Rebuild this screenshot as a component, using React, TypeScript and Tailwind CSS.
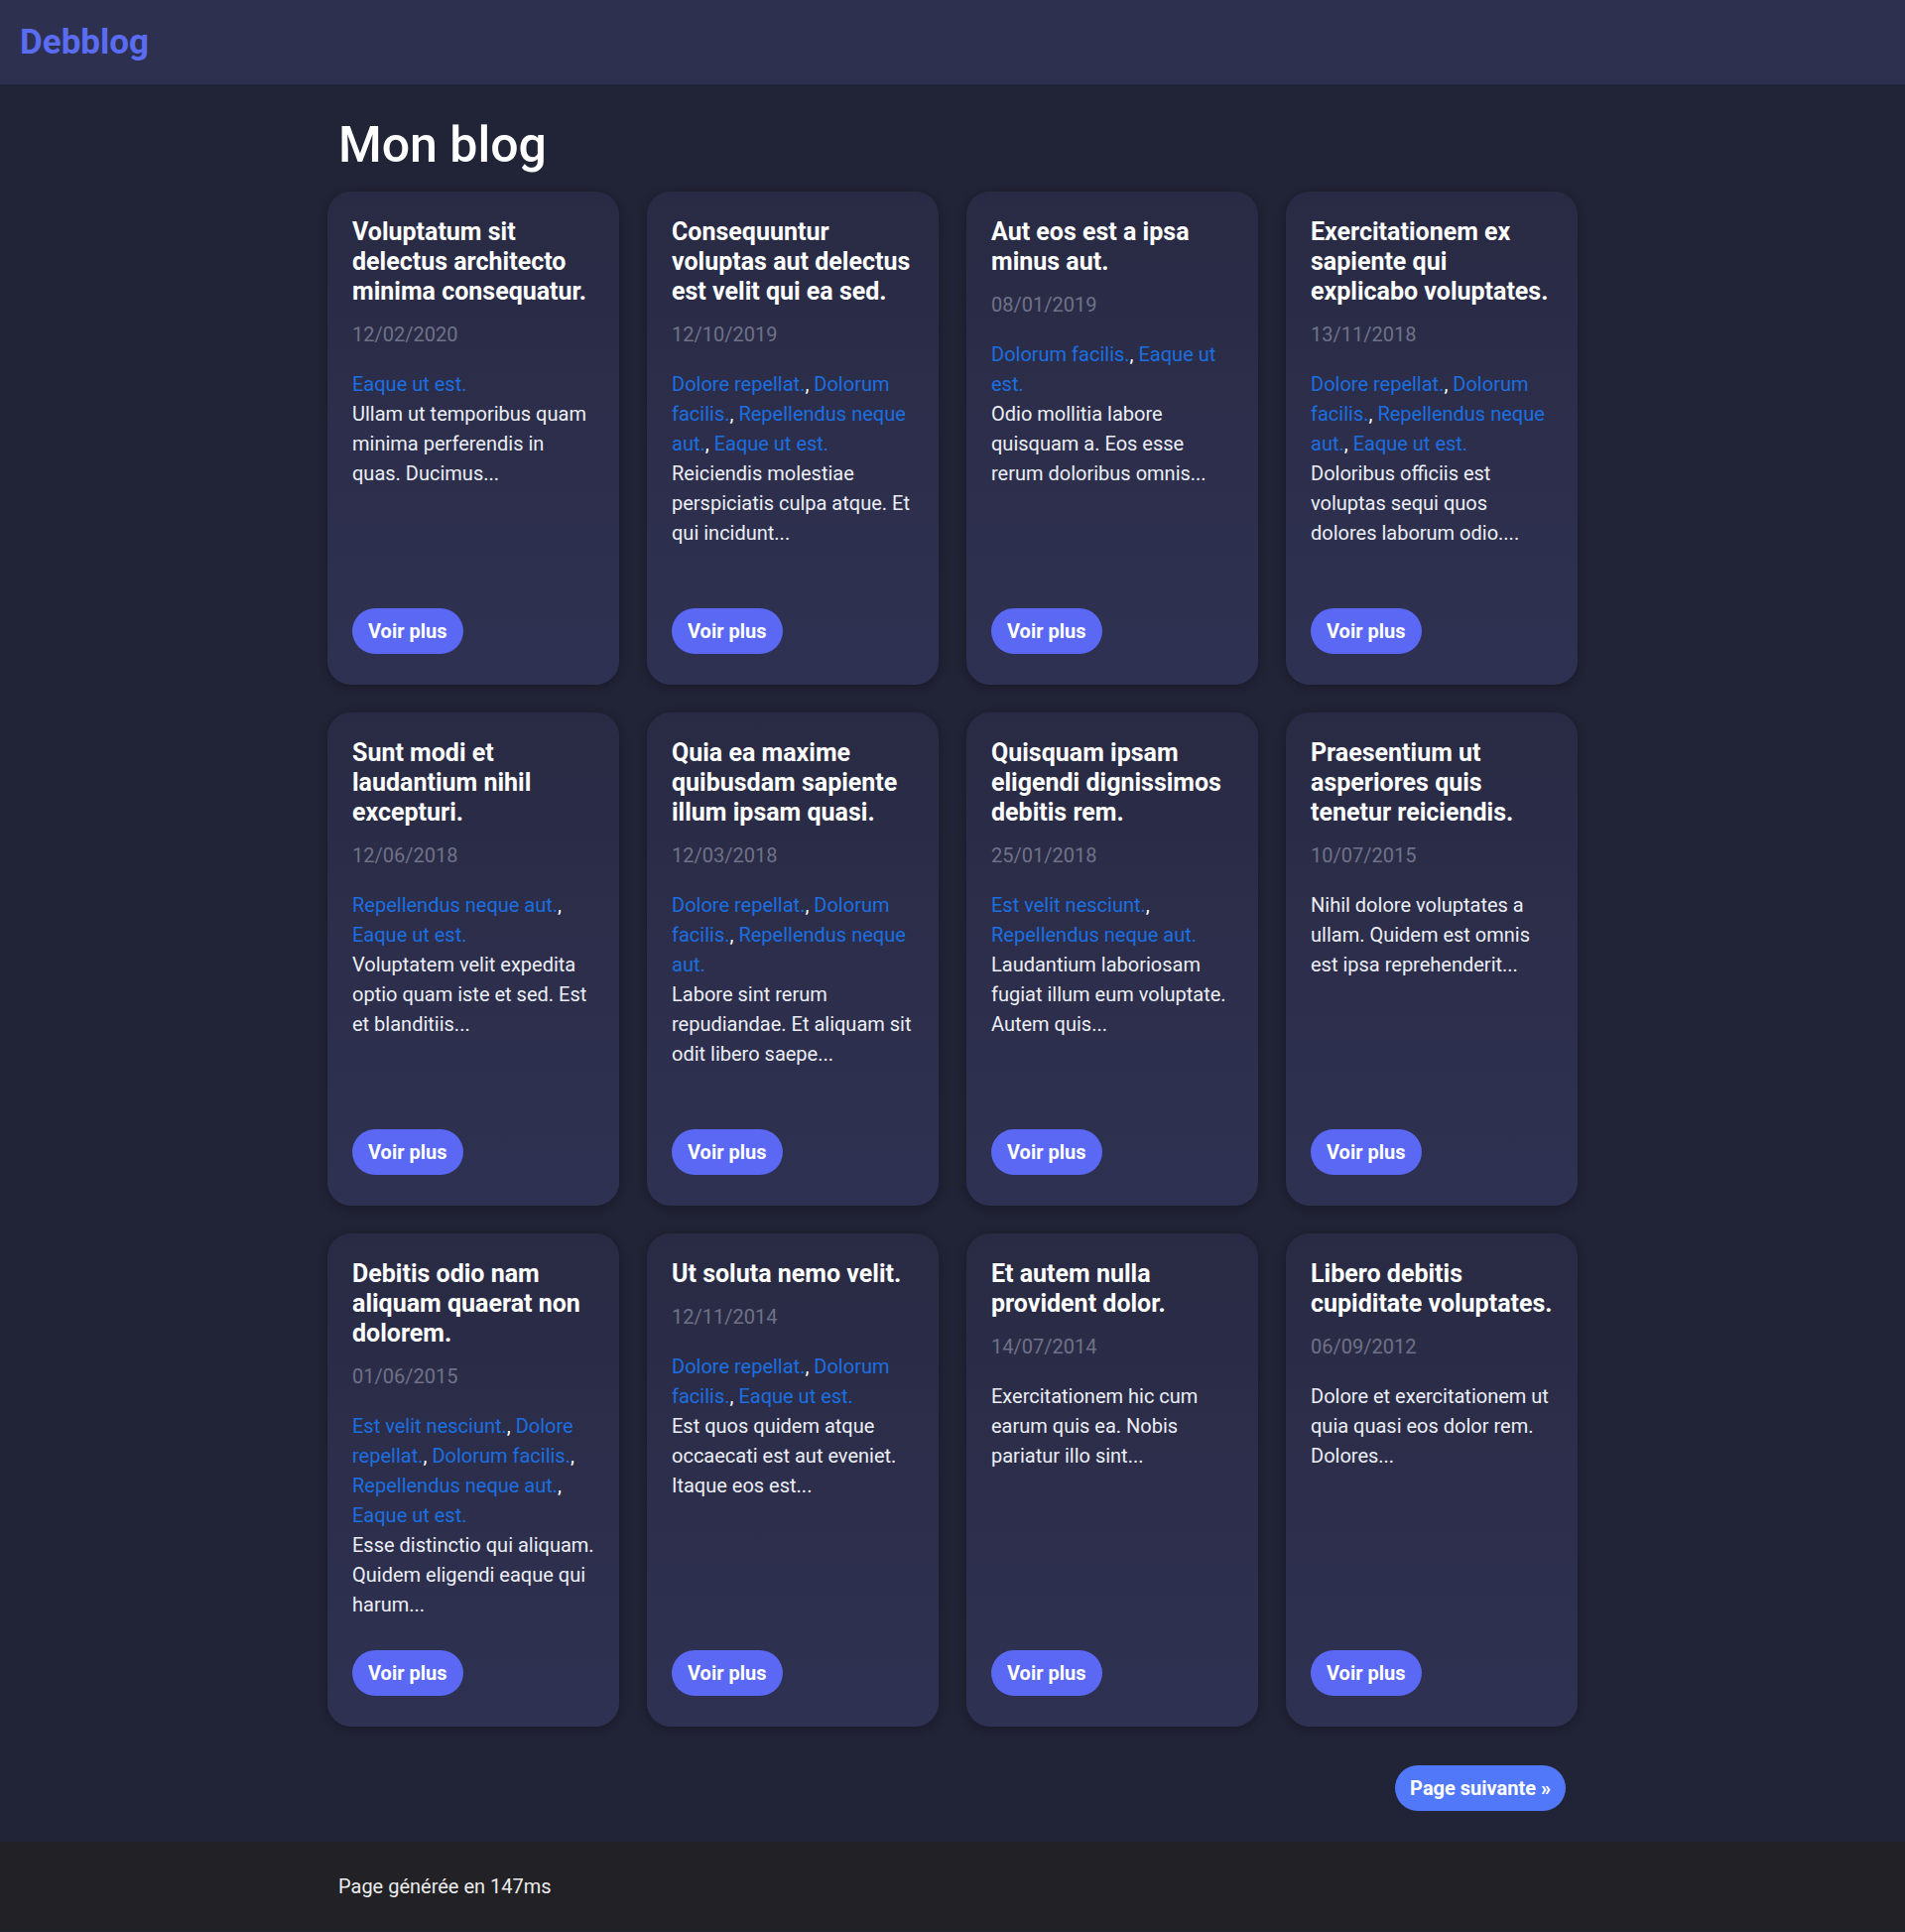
import React from 'react'

type Post = {
  title: string
  date: string
  tags: string[]
  excerpt: string
}

const posts: Post[] = [
  {
    title: 'Voluptatum sit delectus architecto minima consequatur.',
    date: '12/02/2020',
    tags: ['Eaque ut est.'],
    excerpt: 'Ullam ut temporibus quam minima perferendis in quas. Ducimus...',
  },
  {
    title: 'Consequuntur voluptas aut delectus est velit qui ea sed.',
    date: '12/10/2019',
    tags: ['Dolore repellat.', 'Dolorum facilis.', 'Repellendus neque aut.', 'Eaque ut est.'],
    excerpt: 'Reiciendis molestiae perspiciatis culpa atque. Et qui incidunt...',
  },
  {
    title: 'Aut eos est a ipsa minus aut.',
    date: '08/01/2019',
    tags: ['Dolorum facilis.', 'Eaque ut est.'],
    excerpt: 'Odio mollitia labore quisquam a. Eos esse rerum doloribus omnis...',
  },
  {
    title: 'Exercitationem ex sapiente qui explicabo voluptates.',
    date: '13/11/2018',
    tags: ['Dolore repellat.', 'Dolorum facilis.', 'Repellendus neque aut.', 'Eaque ut est.'],
    excerpt: 'Doloribus officiis est voluptas sequi quos dolores laborum odio....',
  },
  {
    title: 'Sunt modi et laudantium nihil excepturi.',
    date: '12/06/2018',
    tags: ['Repellendus neque aut.', 'Eaque ut est.'],
    excerpt: 'Voluptatem velit expedita optio quam iste et sed. Est et blanditiis...',
  },
  {
    title: 'Quia ea maxime quibusdam sapiente illum ipsam quasi.',
    date: '12/03/2018',
    tags: ['Dolore repellat.', 'Dolorum facilis.', 'Repellendus neque aut.'],
    excerpt: 'Labore sint rerum repudiandae. Et aliquam sit odit libero saepe...',
  },
  {
    title: 'Quisquam ipsam eligendi dignissimos debitis rem.',
    date: '25/01/2018',
    tags: ['Est velit nesciunt.', 'Repellendus neque aut.'],
    excerpt: 'Laudantium laboriosam fugiat illum eum voluptate. Autem quis...',
  },
  {
    title: 'Praesentium ut asperiores quis tenetur reiciendis.',
    date: '10/07/2015',
    tags: [],
    excerpt: 'Nihil dolore voluptates a ullam. Quidem est omnis est ipsa reprehenderit...',
  },
  {
    title: 'Debitis odio nam aliquam quaerat non dolorem.',
    date: '01/06/2015',
    tags: ['Est velit nesciunt.', 'Dolore repellat.', 'Dolorum facilis.', 'Repellendus neque aut.', 'Eaque ut est.'],
    excerpt: 'Esse distinctio qui aliquam. Quidem eligendi eaque qui harum...',
  },
  {
    title: 'Ut soluta nemo velit.',
    date: '12/11/2014',
    tags: ['Dolore repellat.', 'Dolorum facilis.', 'Eaque ut est.'],
    excerpt: 'Est quos quidem atque occaecati est aut eveniet. Itaque eos est...',
  },
  {
    title: 'Et autem nulla provident dolor.',
    date: '14/07/2014',
    tags: [],
    excerpt: 'Exercitationem hic cum earum quis ea. Nobis pariatur illo sint...',
  },
  {
    title: 'Libero debitis cupiditate voluptates.',
    date: '06/09/2012',
    tags: [],
    excerpt: 'Dolore et exercitationem ut quia quasi eos dolor rem. Dolores...',
  },
]

function PostCard({ post }: { post: Post }) {
  return (
    <article className="flex h-[497px] flex-col rounded-3xl bg-gradient-to-b from-[#292b44] to-[#2f3152] px-[25px] pt-[26px] pb-[31px] shadow-[0_2px_10px_rgba(0,0,0,0.25)]">
      <h2 className="text-[25px] font-bold leading-[30px] text-white">{post.title}</h2>
      <p className="mt-[13px] text-[20px] leading-[30px] text-[#6f7287]">{post.date}</p>
      <div className="mt-[20px] text-[20px] leading-[30px]">
        {post.tags.length > 0 && (
          <p className="text-white">
            {post.tags.map((tag, i) => (
              <span key={tag}>
                <a href="#" className="text-[#1c6fe0]">
                  {tag}
                </a>
                {i < post.tags.length - 1 && ', '}
              </span>
            ))}
          </p>
        )}
        <p className="text-[#eceef5]">{post.excerpt}</p>
      </div>
      <div className="mt-auto">
        <a
          href="#"
          className="inline-flex h-[46px] items-center rounded-full bg-[#5a68f3] px-4 text-[20px] font-bold text-white"
        >
          Voir plus
        </a>
      </div>
    </article>
  )
}

export default function App() {
  return (
    <div className="min-h-screen bg-[#212336] font-['Roboto',sans-serif]">
      <header className="flex h-[85px] items-center bg-[#2e3050] px-[20px]">
        <a href="#" className="text-[35px] font-bold leading-none text-[#5a6cf0]">
          Debblog
        </a>
      </header>

      <main className="mx-auto w-[1260px]">
        <h1 className="px-[11px] pt-[35px] pb-[21px] text-[50px] font-medium leading-[52px] text-white">
          Mon blog
        </h1>
        <div className="grid grid-cols-4 gap-7">
          {posts.map((post) => (
            <PostCard key={post.title} post={post} />
          ))}
        </div>
        <div className="flex justify-end px-[12px] pt-[39px] pb-[31px]">
          <a
            href="#"
            className="inline-flex h-[46px] items-center rounded-full bg-[#5278fa] px-[15px] text-[20px] font-bold text-white"
          >
            Page suivante »
          </a>
        </div>
      </main>

      <footer className="bg-[#222126] py-[30px]">
        <div className="mx-auto w-[1260px] px-[11px] text-[20px] leading-[30px] text-[#ececec]">
          Page générée en 147ms
        </div>
      </footer>
    </div>
  )
}
